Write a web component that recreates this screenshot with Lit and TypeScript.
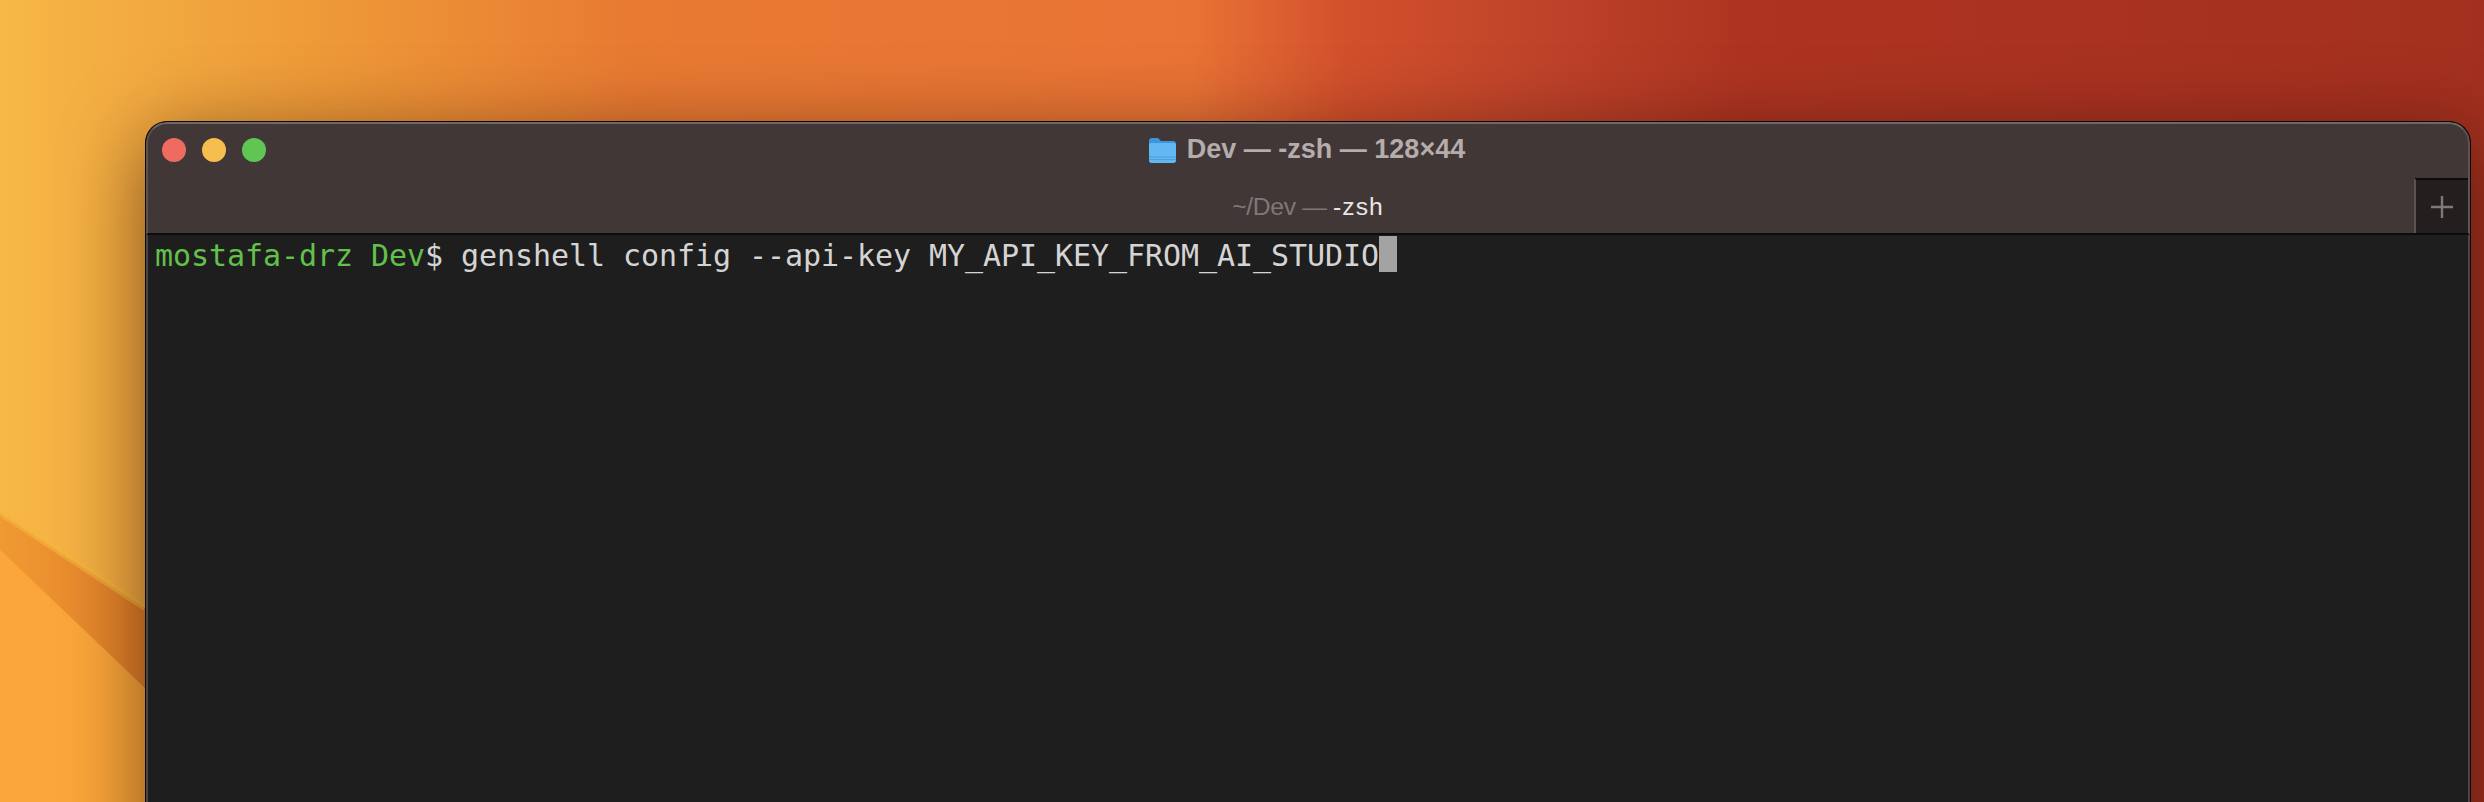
import { LitElement, html, css, svg } from "lit";
import { customElement } from "lit/decorators.js";

@customElement("app-root")
export class AppRoot extends LitElement {
  static styles = css`
    :host { display: block; width: 2484px; height: 802px; overflow: hidden; position: relative; }
    .desk {
      width: 2484px; height: 802px; box-sizing: border-box; padding: 121px 13px 0 145px;
      position: relative; overflow: hidden;
      background:
        linear-gradient(90deg, #f7b846 0px, #f3ad42 110px, #ee9a38 317px, #e87a32 634px, #e97335 1190px, #d2502c 1347px, #c0442a 1530px, #ae3421 1743px, #a93220 2100px, #a3301e 2484px);
    }
    .paper { position: absolute; left: 0; top: 0; width: 2484px; height: 802px; }
    .win {
      position: relative; height: 820px; box-sizing: border-box;
      border: 1px solid #0c0b0b; border-bottom: 0; border-radius: 22px 22px 0 0;
      background: #1e1e1e; overflow: hidden; display: flex; flex-direction: column;
      box-shadow: 0 18px 80px rgba(30,10,0,.55);
    }
    .chrome {
      box-sizing: border-box; height: 113px; background: #403736; flex: none;
      border-top: 2px solid #6f6867; border-left: 2px solid #5b5453; border-right: 2px solid #5b5453;
      border-radius: 21px 21px 0 0; display: flex; flex-direction: column;
      border-bottom: 2px solid #0d0c0c;
    }
    .titlebar { height: 54px; flex: none; display: flex; align-items: center; position: relative; justify-content: center; padding: 0 3px 3px 0; box-sizing: border-box; }
    .lights { position: absolute; left: 14px; top: 14px; display: flex; gap: 16px; }
    .dot { width: 24px; height: 24px; border-radius: 50%; }
    .r { background: #ef6a5f; } .y { background: #f6be4f; } .g { background: #61c554; }
    .title { display: flex; align-items: center; gap: 10px; font: 700 27px "Liberation Sans", Arial, sans-serif; color: #b5acac; }
    .title svg { display: block; }
    .tabs { flex: 1; display: flex; }
    .tab { flex: 1; display: flex; align-items: center; justify-content: center; padding: 2px 0 0 54px; font: 400 24.7px "Liberation Sans", Arial, sans-serif; color: #7f7877; letter-spacing: -.35px; }
    .tab b { font-weight: 400; color: #e9e6e6; letter-spacing: 1px; }
    .plus {
      width: 54px; flex: none; box-sizing: border-box; background: #231f1e;
      border-top: 2px solid #0d0c0c; border-left: 2px solid #5a5352;
      display: flex; align-items: center; justify-content: center;
    }
    .term {
      flex: 1; background: #1e1e1e; border-left: 2px solid #48464a; border-right: 2px solid #48464a;
      padding: 3px 0 0 7px; font: 400 30px/36px "DejaVu Sans Mono", "Liberation Mono", monospace;
      letter-spacing: -.06px; color: #d4d4d4; white-space: pre;
    }
    .prompt { color: #63c04b; }
    .cursor { display: inline-block; width: 18px; height: 36px; background: #a3a3a3; vertical-align: top; margin-top: -2px; }
  `;

  render() {
    return html`<div class="desk">
      <svg class="paper" viewBox="0 0 2484 802">
        <defs>
          <linearGradient id="band" x1="0" y1="0" x2="1" y2="0">
            <stop offset="0" stop-color="#f09a33"/><stop offset="1" stop-color="#e27f28"/>
          </linearGradient>
        </defs>
        ${svg`
          <polygon points="0,550 145,688 145,802 0,802" fill="#fba63a"/>
          <polygon points="0,513 145,608 145,688 0,550" fill="url(#band)"/>
          <polyline points="0,513 145,608" fill="none" stroke="#f6b63c" stroke-width="6" opacity=".6"/>
        `}
      </svg>
      <div class="win">
        <div class="chrome">
          <div class="titlebar">
            <div class="lights"><div class="dot r"></div><div class="dot y"></div><div class="dot g"></div></div>
            <div class="title">
              <svg width="29" height="28" viewBox="0 0 29 28">
                <path d="M1 5a3 3 0 0 1 3-3h6l3 3h12a3 3 0 0 1 3 3v16a3 3 0 0 1-3 3H4a3 3 0 0 1-3-3z" fill="#3f95dd"/>
                <path d="M1 9a2 2 0 0 1 2-2h23a2 2 0 0 1 2 2v15a3 3 0 0 1-3 3H4a3 3 0 0 1-3-3z" fill="#62b8f2"/>
                <path d="M1 21h27M1 23.5h27" stroke="#4a9fe0" stroke-width="1"/>
              </svg>
              <span>Dev — -zsh — 128×44</span>
            </div>
          </div>
          <div class="tabs">
            <div class="tab"><span>~/Dev — <b>-zsh</b></span></div>
            <div class="plus">
              <svg width="22" height="22" viewBox="0 0 22 22"><path d="M11 0v22M0 11h22" stroke="#7d7a79" stroke-width="2.4"/></svg>
            </div>
          </div>
        </div>
        <div class="term"><span class="prompt">mostafa-drz Dev</span>$ genshell config --api-key MY_API_KEY_FROM_AI_STUDIO<span class="cursor"></span></div>
      </div>
    </div>`;
  }
}
